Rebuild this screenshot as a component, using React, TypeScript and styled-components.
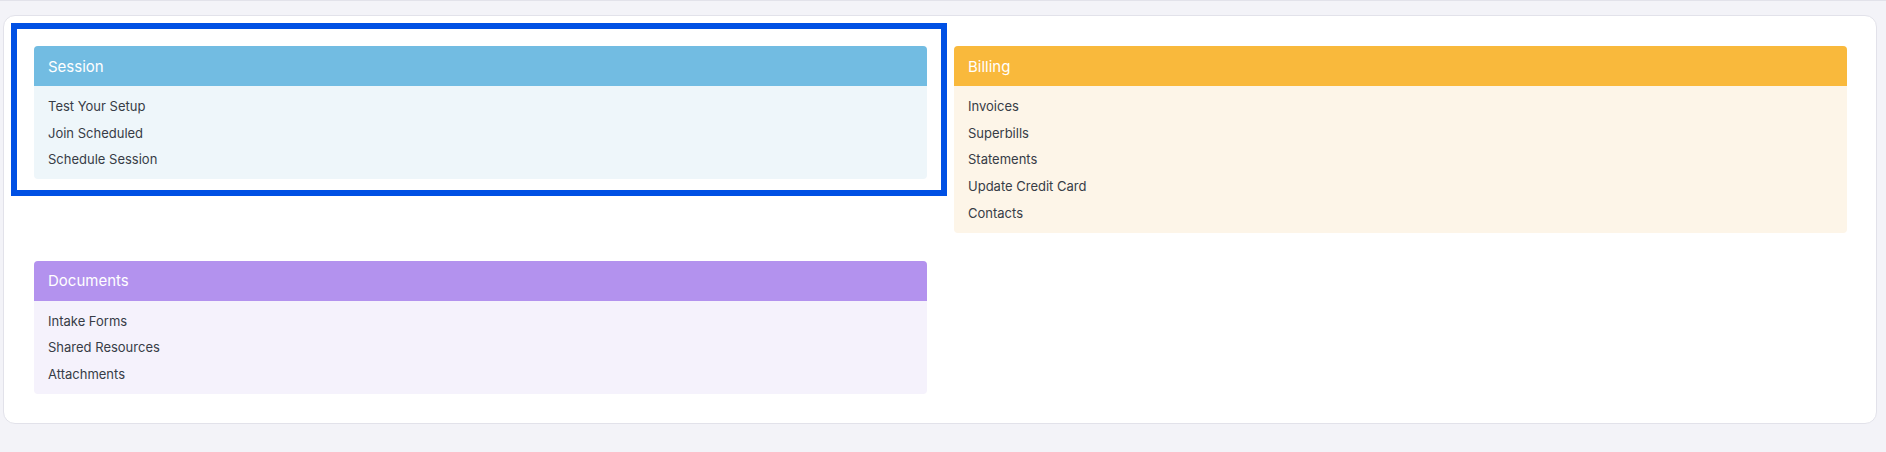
import styled, { createGlobalStyle } from 'styled-components'

type Tone = 'blue' | 'amber' | 'violet'

const tones: Record<Tone, { head: string; body: string }> = {
  blue: { head: '#72bce2', body: '#eef6fa' },
  amber: { head: '#f9b93c', body: '#fdf5e8' },
  violet: { head: '#b392ee', body: '#f5f2fc' },
}

const sections: { title: string; tone: Tone; items: string[]; selected?: boolean }[] = [
  { title: 'Session', tone: 'blue', items: ['Test Your Setup', 'Join Scheduled', 'Schedule Session'], selected: true },
  { title: 'Billing', tone: 'amber', items: ['Invoices', 'Superbills', 'Statements', 'Update Credit Card', 'Contacts'] },
  { title: 'Documents', tone: 'violet', items: ['Intake Forms', 'Shared Resources', 'Attachments'] },
]

const GlobalStyle = createGlobalStyle`
  html, body {
    margin: 0;
    padding: 0;
    background: #f3f3f8;
    font-family: Inter, "Liberation Sans", sans-serif;
  }
`

const App = () => {
  return (
    <>
      <GlobalStyle />
      <StyledPage>
        <StyledPanel>
          <StyledGrid>
            {sections.map(section => (
              <StyledSection key={section.title} tone={section.tone} selected={section.selected}>
                <StyledHeader tone={section.tone}>{section.title}</StyledHeader>
                <StyledList>
                  {section.items.map(item => <StyledItem key={item}>{item}</StyledItem>)}
                </StyledList>
              </StyledSection>
            ))}
          </StyledGrid>
        </StyledPanel>
      </StyledPage>
    </>
  );
}

const StyledPage = styled.div`
  height: 452px;
  box-sizing: border-box;
  border-top: 1px solid #e2e2ea;
  padding: 14px 9px 0 3px;
`

const StyledPanel = styled.div`
  background: #ffffff;
  border: 1px solid #e2e2ea;
  border-radius: 12px;
  height: 409px;
  box-sizing: border-box;
  padding: 30px 29px 30px 30px;
`

const StyledGrid = styled.div`
  display: grid;
  grid-template-columns: 1fr 1fr;
  column-gap: 27px;
  row-gap: 28px;
  align-items: start;
`

const StyledSection = styled.section<{ tone: Tone; selected?: boolean }>`
  position: relative;
  background: ${p => tones[p.tone].body};
  border-radius: 4px;
  &::after {
    content: '';
    display: ${p => p.selected ? 'block' : 'none'};
    position: absolute;
    top: -23px;
    left: -23px;
    right: -20px;
    bottom: -17px;
    border: 6px solid #0050e4;
    pointer-events: none;
  }
`

const StyledHeader = styled.h3<{ tone: Tone }>`
  margin: 0;
  height: 40px;
  display: flex;
  align-items: center;
  padding: 0 14px;
  background: ${p => tones[p.tone].head};
  border-radius: 4px 4px 0 0;
  color: #ffffff;
  font-size: 15px;
  font-weight: 400;
`

const StyledList = styled.ul`
  list-style-type: none;
  margin: 0;
  padding: 7px 14px 6px;
`

const StyledItem = styled.li`
  font-size: 13px;
  line-height: 16.7px;
  padding: 5px 0;
  color: #373c46;
  cursor: pointer;
`

export default App
